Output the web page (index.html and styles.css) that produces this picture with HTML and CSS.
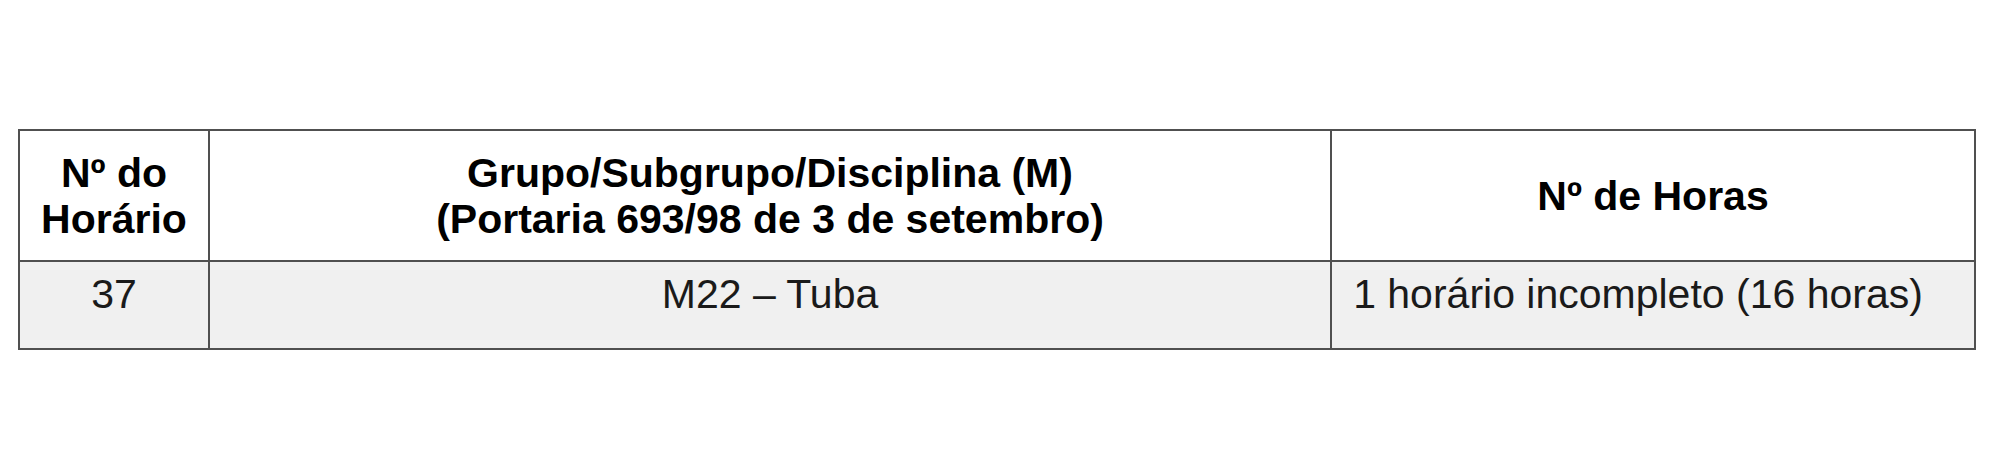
FILE: index.html
```html
<!DOCTYPE html>
<html lang="pt">
<head>
<meta charset="utf-8">
<title>Horário</title>
<link rel="stylesheet" href="styles.css">
</head>
<body>
<div class="page">
  <table class="schedule">
    <colgroup>
      <col class="c-num">
      <col class="c-group">
      <col class="c-hours">
    </colgroup>
    <thead>
      <tr>
        <th>Nº do<br>Horário</th>
        <th>Grupo/Subgrupo/Disciplina (M)<br>(Portaria 693/98 de 3 de setembro)</th>
        <th>Nº de Horas</th>
      </tr>
    </thead>
    <tbody>
      <tr>
        <td>37</td>
        <td>M22 – Tuba</td>
        <td>1 horário incompleto (16 horas)</td>
      </tr>
    </tbody>
  </table>
</div>
</body>
</html>
```

FILE: styles.css
```css
html, body {
  margin: 0;
  padding: 0;
  background: #ffffff;
}

.page {
  padding: 129px 0 0 18px;
}

.schedule {
  border-collapse: collapse;
  table-layout: fixed;
  width: 1956px;
  font-family: "Liberation Sans", Arial, sans-serif;
  font-size: 41px;
  line-height: 46px;
  color: #000;
}

.c-num { width: 190px; }
.c-group { width: 1122px; }
.c-hours { width: 644px; }

.schedule th,
.schedule td {
  border: 2px solid #505050;
  text-align: center;
  padding: 0;
}

.schedule th {
  height: 128px;
  font-weight: bold;
  vertical-align: middle;
  background: #ffffff;
  padding-top: 1px;
}

.schedule td {
  height: 77px;
  vertical-align: top;
  padding-top: 9px;
  background: #f0f0f0;
  color: #1a1a1a;
}

.schedule td:nth-child(3) {
  padding-right: 30px;
}
```
